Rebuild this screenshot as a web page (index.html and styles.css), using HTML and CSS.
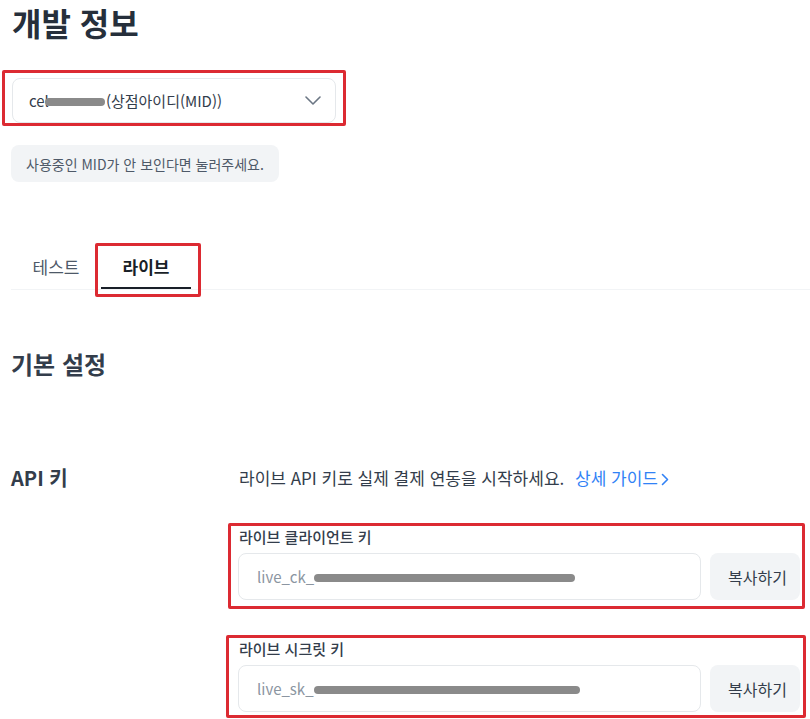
FILE: index.html
```html
<!DOCTYPE html>
<html lang="ko">
<head>
  <meta charset="UTF-8" />
  <title>개발 정보</title>
  <link rel="stylesheet" href="styles.css">
</head>
<body>
  <main class="page">
    <h1 class="title">개발 정보</h1>

    <div class="mark mark-mid">
      <div class="mid-select">
        <span class="mid-text">cel<span class="blur blur-mid"></span>(상점아이디(MID))</span>
        <svg class="chevron" width="16" height="9" viewBox="0 0 16 9"><path d="M1 1l7 7 7-7" fill="none" stroke="#6b7684" stroke-width="1.6" stroke-linecap="round" stroke-linejoin="round"/></svg>
      </div>
    </div>

    <button class="mid-help">사용중인 MID가 안 보인다면 눌러주세요.</button>

    <nav class="tabs">
      <span class="tab">테스트</span>
      <span class="tab active">라이브</span>
    </nav>

    <h2 class="section-title">기본 설정</h2>

    <section class="field-row">
      <div class="field-label">API 키</div>
      <div class="field-body">
        <p class="desc">라이브 API 키로 실제 결제 연동을 시작하세요.
          <a class="guide" href="#">상세 가이드<svg width="8" height="13" viewBox="0 0 8 13"><path d="M1.5 1.5l5 5-5 5" fill="none" stroke="#3182f6" stroke-width="1.6" stroke-linecap="round" stroke-linejoin="round"/></svg></a>
        </p>

        <div class="mark mark-key">
          <div class="key-label">라이브 클라이언트 키</div>
          <div class="key-row">
            <div class="key-input">live_ck_<span class="blur blur-ck"></span></div>
            <button class="copy-btn">복사하기</button>
          </div>
        </div>

        <div class="mark mark-key second">
          <div class="key-label">라이브 시크릿 키</div>
          <div class="key-row">
            <div class="key-input">live_sk_<span class="blur blur-sk"></span></div>
            <button class="copy-btn">복사하기</button>
          </div>
        </div>
      </div>
    </section>
  </main>
</body>
</html>
```

FILE: styles.css
```css
* {
  box-sizing: border-box;
  margin: 0;
  padding: 0;
}

html, body {
  background: #ffffff;
  font-family: "Noto Sans CJK KR", "Noto Sans", sans-serif;
  color: #333d4b;
  overflow: hidden;
}

.page {
  padding: 0 0 0 11px;
  width: 810px;
}

.title {
  font-size: 32px;
  line-height: 44px;
  font-weight: 700;
  color: #262f3b;
  padding-left: 1px;
}

.mark {
  border: 3px solid #dc2a32;
  border-radius: 2px;
}

.mark-mid {
  width: 344px;
  margin: 26px 0 0 -9px;
  padding: 5px 7px 0 7px;
}

.mid-select {
  height: 45px;
  border: 1px solid #e5e8eb;
  border-radius: 8px;
  display: flex;
  align-items: center;
  justify-content: space-between;
  padding: 0 14px 0 16px;
}

.mid-text {
  font-size: 15px;
  color: #333d4b;
  display: flex;
  align-items: center;
}

.blur {
  display: inline-block;
  height: 8px;
  border-radius: 4px;
  background: #8a8a8a;
}

.blur-mid {
  width: 60px;
  margin: 2px 1px 0 -4px;
}

.mid-help {
  display: block;
  margin-top: 19px;
  height: 37px;
  padding: 0 15px;
  border: none;
  border-radius: 8px;
  background: #f2f4f6;
  font-family: inherit;
  font-size: 14px;
  color: #4e5968;
}

.tabs {
  display: flex;
  margin-top: 63px;
  border-bottom: 1px solid #f2f4f6;
}

.tab {
  position: relative;
  width: 90px;
  height: 44px;
  display: flex;
  align-items: center;
  justify-content: center;
  padding-bottom: 2px;
  font-size: 17px;
  color: #4e5968;
}

.tab.active {
  font-weight: 700;
  color: #191f28;
  border-bottom: 2px solid #191f28;
  padding-bottom: 0;
}

.tab.active::before {
  content: "";
  position: absolute;
  left: -6px;
  right: -10px;
  top: -2px;
  bottom: -10px;
  border: 3px solid #dc2a32;
  border-radius: 2px;
}

.section-title {
  margin-top: 58px;
  font-size: 24px;
  line-height: 32px;
  font-weight: 700;
  color: #333d4b;
}

.field-row {
  display: grid;
  grid-template-columns: 227px 1fr;
  margin-top: 84px;
  padding-right: 5px;
}

.field-label {
  font-size: 20px;
  line-height: 28px;
  font-weight: 700;
  color: #333d4b;
}

.desc {
  font-size: 17px;
  line-height: 28px;
  color: #333d4b;
  padding-left: 1px;
}

.guide {
  color: #3182f6;
  text-decoration: none;
  margin-left: 6px;
}

.guide svg {
  margin-left: 3px;
  vertical-align: -1px;
}

.mark-key {
  margin: 31px 0 0 -10px;
  padding: 0 2px 6px 7px;
}

.mark-key.second {
  margin: 26px -1px 0 -12px;
  padding: 0 3px 3px 9px;
}

.key-label {
  font-size: 15px;
  line-height: 21px;
  font-weight: 500;
  color: #333d4b;
  padding-left: 1px;
}

.key-row {
  display: flex;
  gap: 9px;
  margin-top: 6px;
}

.key-input {
  flex: 1;
  height: 47px;
  border: 1px solid #e5e8eb;
  border-radius: 8px;
  display: flex;
  align-items: center;
  padding-left: 18px;
  font-size: 15px;
  color: #8b95a1;
}

.blur-ck {
  width: 261px;
  margin-top: 2px;
}

.blur-sk {
  width: 266px;
  margin-top: 2px;
}

.copy-btn {
  width: 90px;
  height: 47px;
  border: none;
  border-radius: 8px;
  background: #f2f4f6;
  font-family: inherit;
  font-size: 16px;
  color: #333d4b;
  padding-left: 5px;
}
```
